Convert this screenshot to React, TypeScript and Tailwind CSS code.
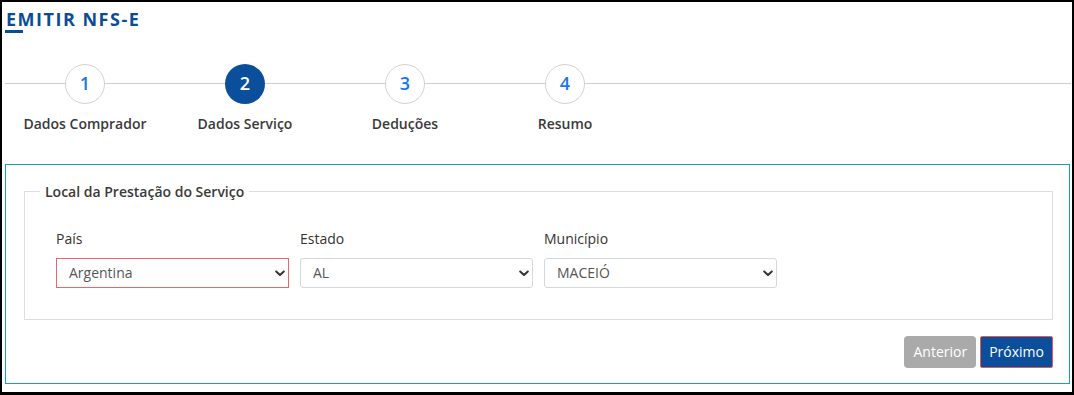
import React, { useState } from "react";

const steps = [
  { n: 1, label: "Dados Comprador" },
  { n: 2, label: "Dados Serviço" },
  { n: 3, label: "Deduções" },
  { n: 4, label: "Resumo" },
];

function Chevron() {
  return (
    <svg width="10" height="7" viewBox="0 0 10 7" className="pointer-events-none absolute right-[4px] top-[12px]">
      <path d="M1.2 1.5l3.8 3.6 3.8-3.6" fill="none" stroke="#333" strokeWidth="2" strokeLinecap="round" strokeLinejoin="round" />
    </svg>
  );
}

function Field({
  label,
  value,
  options,
  invalid,
  onChange,
}: {
  label: string;
  value: string;
  options: string[];
  invalid?: boolean;
  onChange: (v: string) => void;
}) {
  return (
    <div className="flex w-[233px] flex-col">
      <label className="h-5 text-sm leading-5 text-[#333]">{label}</label>
      <div className="relative mt-[9px]">
        <select
          value={value}
          onChange={e => onChange(e.target.value)}
          className={
            "h-[30px] w-full appearance-none rounded-[3px] border bg-white pl-[12px] text-sm text-[#555] outline-none " +
            (invalid ? "rounded-none border-[#e86868]" : "border-[#d4d7dc]")
          }
        >
          {options.map(o => (
            <option key={o}>{o}</option>
          ))}
        </select>
        <Chevron />
      </div>
    </div>
  );
}

export default function App() {
  const [pais, setPais] = useState("Argentina");
  const [estado, setEstado] = useState("AL");
  const [municipio, setMunicipio] = useState("MACEIÓ");
  const current = 2;

  return (
    <div className="h-[395px] w-[1074px] border-2 border-b-[3px] border-black bg-white font-['Open_Sans',sans-serif]">
      <div className="pl-[3px] pr-[1px]">
        <h1 className="mt-[5.5px] pl-[1px] text-[18px] font-bold leading-[22px] tracking-[1.5px] text-[#0b4c96]">
          EMITIR NFS-E
        </h1>
        <div className="h-[3px] w-[18px] bg-[#0b4c96]" />

        <div className="relative mt-[31px]">
          <div className="absolute left-0 right-0 top-[19px] h-px bg-[#cfcfcf]" />
          <div className="relative flex">
            {steps.map(s => (
              <div key={s.n} className="flex w-[160px] flex-col items-center">
                <div
                  className={
                    "flex h-10 w-10 items-center justify-center rounded-full text-[18px] font-semibold " +
                    (s.n === current
                      ? "bg-[#0b4f9c] text-white"
                      : "border border-[#d2d2d2] bg-white text-[#1a76f0]")
                  }
                >
                  {s.n}
                </div>
                <span className="mt-[10px] text-sm font-semibold leading-5 text-[#3a3a3a]">{s.label}</span>
              </div>
            ))}
          </div>
        </div>

        <div className="mt-[30px] mr-[1px] border border-[#17a2b8] pl-[18px] pr-[16px] pb-[15px] pt-[17px]">
          <fieldset className="border border-[#dedede] px-[15px] pb-[31px]">
            <legend className="px-[5px] text-sm font-semibold leading-5 text-[#3a3a3a]">
              Local da Prestação do Serviço
            </legend>
            <div className="mt-[27px] flex gap-[11px] pl-[16px]">
              <Field
                label="País"
                value={pais}
                options={["Argentina", "Brasil", "Chile", "Uruguai"]}
                invalid
                onChange={setPais}
              />
              <Field label="Estado" value={estado} options={["AL", "BA", "PE", "SP"]} onChange={setEstado} />
              <Field
                label="Município"
                value={municipio}
                options={["MACEIÓ", "ARAPIRACA", "PENEDO"]}
                onChange={setMunicipio}
              />
            </div>
          </fieldset>

          <div className="mt-[16px] flex justify-end gap-[4px]">
            <button className="h-[32px] rounded-[4px] bg-[#aaaaaa] px-[9px] text-sm text-white">Anterior</button>
            <button className="h-[32px] rounded-[2px] border border-[#e05a5a] bg-[#0b4f9c] px-[8px] text-sm text-white">
              Próximo
            </button>
          </div>
        </div>
      </div>
    </div>
  );
}
